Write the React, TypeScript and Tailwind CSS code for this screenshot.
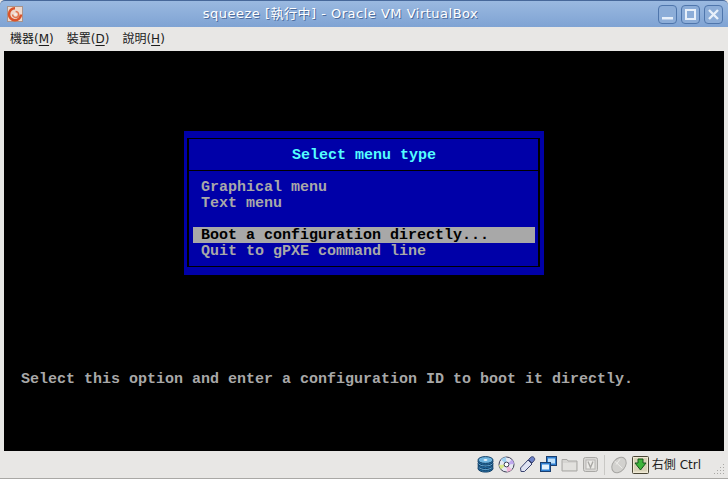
import type { ReactNode } from "react";

const uiFont = "font-['DejaVu_Sans','Noto_Sans_CJK_TC',sans-serif]";

function Logo() {
  return (
    <svg width="16" height="16" viewBox="0 0 16 16" className="shrink-0">
      <rect x="0.5" y="0.5" width="15" height="15" fill="#efd9cc" stroke="#a8938c" />
      <path d="M8 2.2a6 6 0 1 0 6 6.3" fill="none" stroke="#d9532a" strokeWidth="2.6" />
      <path d="M8.6 5.4a3 3 0 1 1-3 3" fill="none" stroke="#e2734a" strokeWidth="1.5" />
      <circle cx="8.5" cy="8.4" r="1.2" fill="#f7efe9" />
    </svg>
  );
}

function WinButton({ children }: { children: ReactNode }) {
  return (
    <div className="flex h-[19px] w-[19px] items-center justify-center rounded-[4px] border border-[#4f76ac] bg-[#8cadd8]">
      <svg width="13" height="13" viewBox="0 0 13 13">
        {children}
      </svg>
    </div>
  );
}

function MenuLabel({ label, hotkey }: { label: string; hotkey: string }) {
  return (
    <span>
      {label}(<span className="underline underline-offset-2">{hotkey}</span>)
    </span>
  );
}

function DiskIcon() {
  return (
    <svg width="17" height="17" viewBox="0 0 17 17">
      {[11, 7.5, 4].map((y) => (
        <g key={y}>
          <ellipse cx="8.5" cy={y + 1.5} rx="7.5" ry="3.6" fill="#1f6fa8" stroke="#123f66" />
          <ellipse cx="8.5" cy={y} rx="7.5" ry="3.4" fill="#6fb4de" stroke="#123f66" />
        </g>
      ))}
      <ellipse cx="8.5" cy="4" rx="2" ry="1" fill="#e6f2fa" />
    </svg>
  );
}

function CdIcon() {
  return (
    <svg width="17" height="17" viewBox="0 0 17 17">
      <circle cx="8.5" cy="8.5" r="7.5" fill="#e6e8f2" stroke="#3d3f55" />
      <path d="M8.5 8.5 3 3.5A7.5 7.5 0 0 1 8 1z" fill="#9fd0f0" />
      <path d="M8.5 8.5 14 13.5A7.5 7.5 0 0 1 9 16z" fill="#f2b6d8" />
      <path d="M8.5 8.5 1 9a7.5 7.5 0 0 0 2 4.5z" fill="#d9e88c" />
      <path d="M8.5 8.5 16 8a7.5 7.5 0 0 0-2-4.5z" fill="#c0a8ee" />
      <circle cx="8.5" cy="8.5" r="2.4" fill="#fff" stroke="#3d3f55" />
    </svg>
  );
}

function UsbIcon() {
  return (
    <svg width="17" height="17" viewBox="0 0 17 17">
      <path d="M2 15.5 1.5 12 9 4l4 4-7.5 7.5z" fill="#dfe3f2" stroke="#3a4470" />
      <path d="M9.5 3.5 12 1.2c1-.8 2.2-.6 3 .3s1 2 .2 3L13 7z" fill="#6d82c8" stroke="#3a4470" />
    </svg>
  );
}

function NetIcon() {
  return (
    <svg width="17" height="17" viewBox="0 0 17 17">
      <rect x="6.5" y="0.5" width="10" height="9" fill="#2f7fd0" stroke="#1b3f70" />
      <rect x="8" y="2.5" width="7" height="5" fill="#bfe0fa" />
      <rect x="0.5" y="6.5" width="10" height="9" fill="#2f7fd0" stroke="#1b3f70" />
      <rect x="2" y="8.5" width="7" height="5" fill="#e4f2fd" />
    </svg>
  );
}

function FolderIcon() {
  return (
    <svg width="17" height="17" viewBox="0 0 17 17">
      <path d="M1 4.5V3.5h5l1 1.5h9v10H1z" fill="#d6d5d2" stroke="#a9a8a5" />
      <rect x="2" y="7" width="13" height="7" fill="#e2e1de" />
    </svg>
  );
}

function ChipIcon() {
  return (
    <svg width="17" height="17" viewBox="0 0 17 17">
      <rect x="1.5" y="1.5" width="14" height="14" rx="2" fill="#d8d7d4" stroke="#a9a8a5" />
      <rect x="4" y="4" width="9" height="9" fill="#ecebe8" stroke="#b5b4b1" />
      <path d="M6 5.5 8.5 11.5 11 5.5" fill="none" stroke="#a9a8a5" strokeWidth="1.4" />
    </svg>
  );
}

function MouseIcon() {
  return (
    <svg width="18" height="18" viewBox="0 0 19 19">
      <ellipse cx="9.5" cy="9.5" rx="6.5" ry="9" transform="rotate(40 9.5 9.5)" fill="#d2d1ce" stroke="#a5a4a1" />
      <path d="M5 5.5 13 13M10.5 3.5 6.5 9" fill="none" stroke="#efeeeb" />
    </svg>
  );
}

function HostKeyIcon() {
  return (
    <svg width="17" height="18" viewBox="0 0 17 18">
      <rect x="0.5" y="0.5" width="16" height="17" rx="1" fill="#efe9d4" stroke="#4a4636" />
      <rect x="2" y="2" width="13" height="13.5" fill="#d8d2b8" />
      <path d="M6 3h5v4h3l-5.5 7L3 7h3z" fill="#3fb53a" stroke="#14541a" />
    </svg>
  );
}

function Grip() {
  const dots = [
    [9, 1],
    [6, 4],
    [9, 4],
    [3, 7],
    [6, 7],
    [9, 7],
    [0, 10],
    [3, 10],
    [6, 10],
    [9, 10],
  ];
  return (
    <svg width="11" height="12" viewBox="0 0 11 12" className="mb-[3px] self-end">
      {dots.map(([x, y]) => (
        <rect key={`${x}-${y}`} x={x} y={y} width="1" height="1" fill="#a9a8a5" />
      ))}
    </svg>
  );
}

export default function App() {
  return (
    <div className={`flex h-[479px] w-[728px] flex-col overflow-hidden bg-[#e8e7e5] ${uiFont}`}>
      <header className="flex h-[27px] shrink-0 items-center rounded-t-[5px] border-t border-[#47689a] bg-gradient-to-b from-[#9ab9e0] to-[#7fa3d3] pr-[5px] pl-[7px]">
        <Logo />
        <div className="flex-1 text-center text-[13px] tracking-[0.5px] text-white [text-shadow:1px_1px_0_#4c6c9c]">
          squeeze [執行中] - Oracle VM VirtualBox
        </div>
        <div className="flex gap-[4px]">
          <WinButton>
            <rect x="1" y="9" width="11" height="2.5" fill="#e8f0fa" />
          </WinButton>
          <WinButton>
            <rect x="2" y="2" width="9" height="9" fill="none" stroke="#e8f0fa" strokeWidth="2" />
          </WinButton>
          <WinButton>
            <path d="M2 2 11 11M11 2 2 11" stroke="#e8f0fa" strokeWidth="2.4" />
          </WinButton>
        </div>
      </header>

      <nav className="flex h-[24px] shrink-0 items-center gap-[13px] pl-[10px] text-[12px] text-[#1c1c1c]">
        <MenuLabel label="機器" hotkey="M" />
        <MenuLabel label="裝置" hotkey="D" />
        <MenuLabel label="說明" hotkey="H" />
      </nav>

      <main className="mx-[4px] flex h-[400px] w-[720px] shrink-0 flex-col bg-black font-['Liberation_Mono',monospace] text-[15px] leading-[18px] font-bold whitespace-pre text-[#a8a8a8]">
        <section className="mt-[80px] ml-[180px] h-[144px] w-[360px] bg-[#0000a8] px-[3px] pt-[7px]">
          <div className="flex h-[129px] w-[353px] flex-col border-x-2 border-y border-black">
            <div className="flex h-[32px] shrink-0 items-center justify-center border-b border-black pt-[2px] pl-[1px] text-[#54fefe]">
              Select menu type
            </div>
            <div className="mt-[8px] pl-[4px]">
              <div className="h-[16px] w-[342px] pl-[8px]">Graphical menu</div>
              <div className="h-[16px] w-[342px] pl-[8px]">Text menu</div>
              <div className="h-[16px]" />
              <div className="h-[16px] w-[342px] bg-[#a8a8a8] pl-[8px] text-black">Boot a configuration directly...</div>
              <div className="h-[16px] w-[342px] pl-[8px]">Quit to gPXE command line</div>
            </div>
          </div>
        </section>
        <p className="mt-[96px] ml-[17px] h-[16px]">Select this option and enter a configuration ID to boot it directly.</p>
      </main>

      <footer className="flex flex-1 items-center justify-end gap-[4px] border-b border-[#a9a8a5] pr-[3px] text-[12px] text-[#1c1c1c]">
        <DiskIcon />
        <CdIcon />
        <UsbIcon />
        <NetIcon />
        <FolderIcon />
        <ChipIcon />
        <div className="mx-[1px] h-[20px] w-px bg-[#c9c8c5]" />
        <MouseIcon />
        <HostKeyIcon />
        <span className="mr-[9px] ml-[-1px]">右側 Ctrl</span>
        <Grip />
      </footer>
    </div>
  );
}
